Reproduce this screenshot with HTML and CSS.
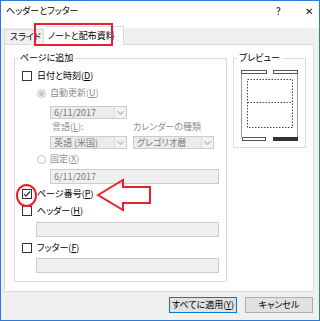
FILE: index.html
```html
<!DOCTYPE html>
<html lang="ja">
  <head>
    <meta charset="UTF-8" />
    <title>ヘッダーとフッター</title>
    <link rel="stylesheet" href="styles.css">
  </head>
  <body>
    <div class="dialog">
      <div class="titlebar">
        <span class="title">ヘッダーとフッター</span>
        <span class="help">?</span>
        <span class="close">✕</span>
      </div>

      <div class="tabs">
        <div class="tab">スライド</div>
        <div class="tab active">ノートと配布資料</div>
      </div>

      <div class="panel">
        <fieldset class="group add">
          <legend>ページに追加</legend>
          <div class="group-body">
            <div class="row">
              <span class="check"></span>
              <span>日付と時刻(<u>D</u>)</span>
            </div>
            <div class="row sub radio-row auto">
              <span class="radio on"></span>
              <span>自動更新(<u>U</u>)</span>
            </div>
            <div class="combo date">
              <span class="combo-text">6/11/2017</span>
              <span class="combo-arrow"></span>
            </div>
            <div class="labels">
              <span class="lang-label">言語(<u>L</u>):</span>
              <span>カレンダーの種類</span>
            </div>
            <div class="combos">
              <div class="combo lang">
                <span class="combo-text">英語 (米国)</span>
                <span class="combo-arrow"></span>
              </div>
              <div class="combo cal">
                <span class="combo-text">グレゴリオ暦</span>
                <span class="combo-arrow"></span>
              </div>
            </div>
            <div class="row sub radio-row fixed">
              <span class="radio"></span>
              <span>固定(<u>X</u>)</span>
            </div>
            <div class="textbox fixed-box">6/11/2017</div>
            <div class="row page-row">
              <span class="check checked">
                <svg width="8" height="8" viewBox="0 0 8 8"><path d="M1 4.2 L3 6.2 L7 1.5" fill="none" stroke="#333" stroke-width="1.2"/></svg>
              </span>
              <span>ページ番号(<u>P</u>)</span>
            </div>
            <div class="row header-row">
              <span class="check"></span>
              <span>ヘッダー(<u>H</u>)</span>
            </div>
            <div class="textbox wide"></div>
            <div class="row footer-row">
              <span class="check"></span>
              <span>フッター(<u>F</u>)</span>
            </div>
            <div class="textbox wide footer-box"></div>
          </div>
        </fieldset>

        <fieldset class="group preview">
          <legend>プレビュー</legend>
          <svg class="page" width="57" height="71" viewBox="0 0 57 71">
            <rect x="0.5" y="0.5" width="25" height="3" fill="#fff" stroke="#555"/>
            <rect x="32.5" y="0.5" width="24" height="3" fill="#fff" stroke="#555"/>
            <line x1="0.5" y1="4" x2="0.5" y2="67" stroke="#9a9a9a"/>
            <line x1="56.5" y1="4" x2="56.5" y2="67" stroke="#9a9a9a"/>
            <rect x="6.5" y="9.5" width="45" height="48" fill="none" stroke="#444" stroke-dasharray="1.5 1.5"/>
            <line x1="6.5" y1="32.5" x2="51.5" y2="32.5" stroke="#444" stroke-dasharray="1.5 1.5"/>
            <rect x="1.5" y="67.5" width="23" height="3" fill="#fff" stroke="#555"/>
            <rect x="32" y="67" width="25" height="4" fill="#333"/>
          </svg>
        </fieldset>
      </div>

      <div class="buttons">
        <button class="btn default">すべてに適用(<u>Y</u>)</button>
        <button class="btn">キャンセル</button>
      </div>

      <div class="mark-tab"></div>
      <div class="mark-circle"></div>
      <svg class="mark-arrow" width="56" height="34" viewBox="0 0 56 34">
        <polygon points="2,17 27,2 27,9 54,9 54,25 27,25 27,32" fill="none" stroke="#e8202a" stroke-width="2" stroke-linejoin="miter"/>
      </svg>
    </div>
  </body>
</html>
```

FILE: styles.css
```css
* {
  margin: 0;
  padding: 0;
  box-sizing: border-box;
}

body {
  font-family: "Noto Sans CJK JP", "Noto Sans", sans-serif;
  font-size: 9px;
  font-feature-settings: "palt";
  color: #000;
  background: #fff;
}

u {
  text-decoration: underline;
  text-underline-offset: 1px;
}

.dialog {
  position: relative;
  width: 320px;
  height: 321px;
  border: 1px solid #2b78d8;
  background-color: #f0f0f0;
  display: flex;
  flex-direction: column;
}

.titlebar {
  height: 27px;
  background-color: #fff;
  display: flex;
  align-items: flex-start;
  padding: 3px 0 0 5px;
  line-height: 13px;
}

.title {
  flex: 1;
}

.help {
  width: 11px;
  margin-right: 18px;
  font-size: 10px;
}

.close {
  width: 14px;
  font-size: 10px;
  color: #111;
}

/* tabs */

.tabs {
  display: flex;
  align-items: flex-end;
  height: 16px;
  margin-left: 3px;
  position: relative;
  z-index: 1;
}

.tab {
  height: 15px;
  padding: 0 2px 0 5px;
  line-height: 14px;
  border: 1px solid #d9d9d9;
  border-bottom: none;
  background-color: #f0f0f0;
}

.tab.active {
  height: 19px;
  margin-bottom: -1px;
  padding: 2px 8px 0 4px;
  background-color: #fff;
  border-left: none;
}

.panel {
  width: 310px;
  height: 248px;
  margin-left: 3px;
  border: 1px solid #d9d9d9;
  background-color: #fff;
  padding: 7px 0 0 9px;
  display: flex;
  align-items: flex-start;
  gap: 6px;
}

/* group boxes */

.group {
  border: 1px solid #dcdcdc;
  min-width: 0;
  padding: 0;
}

.group legend {
  margin-left: 3px;
  padding: 0 2px;
  line-height: 12px;
}

.group.add {
  width: 213px;
  height: 230px;
}

.group.preview {
  width: 73px;
  height: 96px;
}

.page {
  display: block;
  margin: 6px 0 0 7px;
}

.group-body {
  padding: 6px 0 0 7px;
}

.row {
  display: flex;
  align-items: center;
  gap: 5px;
  height: 12px;
  line-height: 12px;
}

.check {
  width: 10px;
  height: 10px;
  border: 1px solid #333;
  background-color: #fff;
  display: flex;
  align-items: center;
  justify-content: center;
}

.radio {
  width: 9px;
  height: 9px;
  border: 1px solid #c4c4c4;
  border-radius: 50%;
  background-color: #fff;
  display: flex;
  align-items: center;
  justify-content: center;
}

.radio.on::after {
  content: "";
  width: 5px;
  height: 5px;
  border-radius: 50%;
  background-color: #c4c4c4;
}

.sub {
  margin-left: 15px;
  gap: 4px;
  color: #8d8d8d;
}

.auto {
  margin-top: 5px;
}

.combo {
  display: flex;
  height: 13px;
  border: 1px solid #cccccc;
  background-color: #ebebeb;
  color: #7a7a7a;
}

.combo-text {
  flex: 1;
  padding-left: 3px;
  line-height: 11px;
}

.combo-arrow {
  width: 12px;
  border-left: 1px solid #dddddd;
  background-color: #f2f2f2;
  position: relative;
}

.combo-arrow::after {
  content: "";
  position: absolute;
  left: 3px;
  top: 2px;
  width: 4px;
  height: 4px;
  border-right: 1px solid #b0b0b0;
  border-bottom: 1px solid #b0b0b0;
  transform: rotate(45deg);
}

.combo.date {
  width: 77px;
  margin: 7px 0 0 28px;
}

.labels {
  display: flex;
  height: 12px;
  line-height: 12px;
  margin: 2px 0 0 30px;
  color: #8d8d8d;
}

.lang-label {
  width: 81px;
}

.combos {
  display: flex;
  gap: 6px;
  margin: 3px 0 0 28px;
}

.combo.lang {
  width: 77px;
}

.combo.cal {
  width: 81px;
}

.fixed {
  margin-top: 4px;
}

.textbox {
  height: 15px;
  border: 1px solid #cccccc;
  background-color: #f0f0f0;
  color: #7a7a7a;
  line-height: 13px;
  padding-left: 3px;
}

.fixed-box {
  width: 169px;
  margin: 4px 0 0 28px;
}

.page-row {
  margin-top: 4px;
}

.header-row {
  margin-top: 5px;
}

.wide {
  width: 183px;
  margin: 5px 0 0 14px;
}

.footer-row {
  margin-top: 5px;
}

.footer-box {
  margin-top: 4px;
}

/* buttons */

.buttons {
  display: flex;
  justify-content: flex-end;
  gap: 8px;
  margin: 5px 6px 0 0;
}

.btn {
  width: 68px;
  height: 16px;
  border: 1px solid #adadad;
  background-color: #e1e1e1;
  font-family: inherit;
  font-size: 9px;
  font-feature-settings: "palt";
  line-height: 14px;
}

.btn.default {
  border-color: #0078d7;
}

/* red marks */

.mark-tab {
  position: absolute;
  left: 33px;
  top: 22px;
  width: 79px;
  height: 23px;
  border: 2px solid #e8202a;
  z-index: 2;
}

.mark-circle {
  position: absolute;
  left: 15px;
  top: 183px;
  width: 21px;
  height: 23px;
  border: 2px solid #e8202a;
  border-radius: 50%;
}

.mark-arrow {
  position: absolute;
  left: 95px;
  top: 177px;
}
```
